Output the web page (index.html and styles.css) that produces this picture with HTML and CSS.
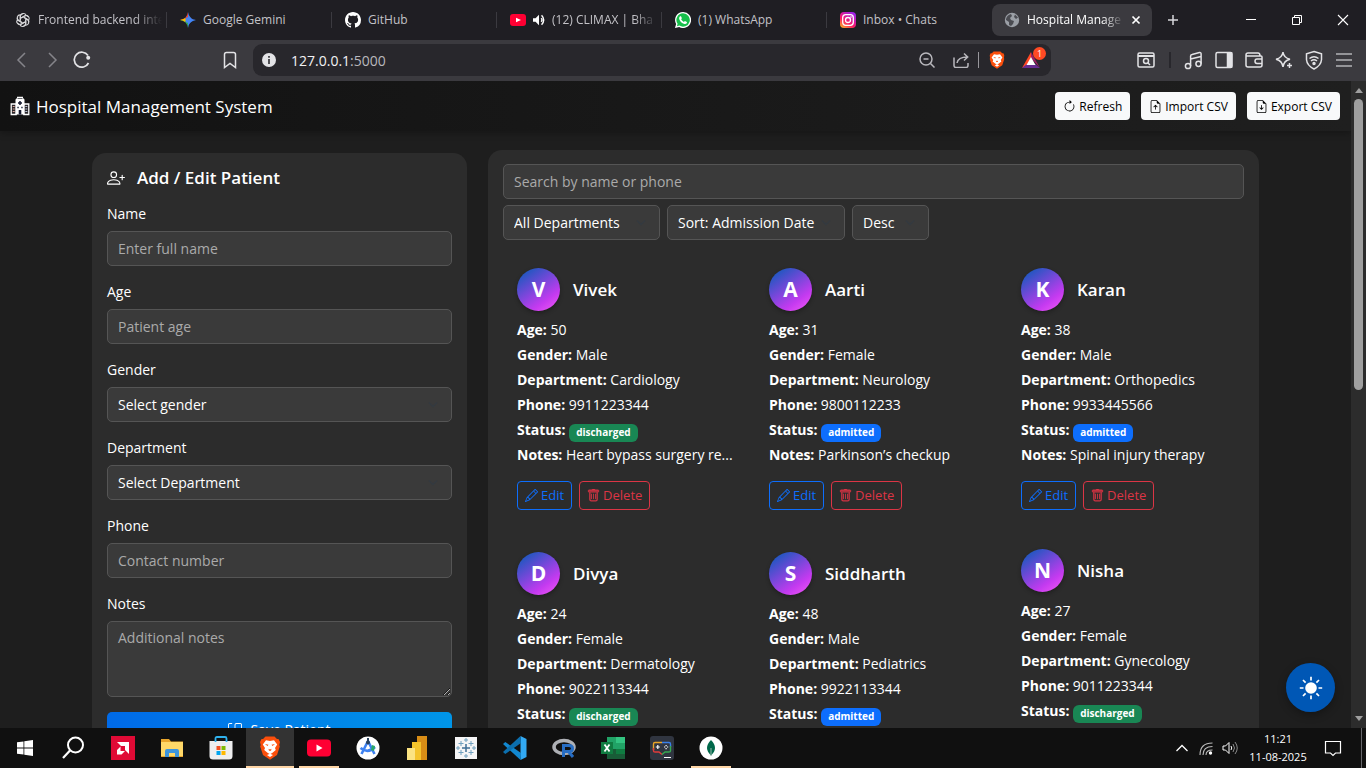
FILE: index.html
```html
<!DOCTYPE html>
<html lang="en">
<head>
<meta charset="utf-8">
<title>Hospital Management System</title>
<link rel="stylesheet" href="styles.css">
</head>
<body>
<svg class="sprite" aria-hidden="true">
  <symbol id="pencil" viewBox="0 0 16 16"><path d="M12.146.146a.5.5 0 0 1 .708 0l3 3a.5.5 0 0 1 0 .708l-10 10a.5.5 0 0 1-.168.11l-5 2a.5.5 0 0 1-.65-.65l2-5a.5.5 0 0 1 .11-.168zM11.207 2.5 13.5 4.793 14.793 3.5 12.5 1.207zm1.586 3L10.5 3.207 4 9.707V10h.5a.5.5 0 0 1 .5.5v.5h.5a.5.5 0 0 1 .5.5v.5h.293zm-9.761 5.175-.106.106-1.528 3.821 3.821-1.528.106-.106A.5.5 0 0 1 5 12.5V12h-.5a.5.5 0 0 1-.5-.5V11h-.5a.5.5 0 0 1-.468-.325"/></symbol>
  <symbol id="trash" viewBox="0 0 16 16"><path d="M5.5 5.500A.5.5 0 0 1 6 6v6a.5.5 0 0 1-1 0V6a.5.5 0 0 1 .5-.5m2.500 0a.5.5 0 0 1 .5.5v6a.5.5 0 0 1-1 0V6a.5.5 0 0 1 .5-.5m3 .5a.5.5 0 0 0-1 0v6a.5.5 0 0 0 1 0z"/><path stroke="currentColor" stroke-width=".5" d="M14.500 3a1 1 0 0 1-1 1H13v9a2 2 0 0 1-2 2H5a2 2 0 0 1-2-2V4h-.5a1 1 0 0 1-1-1V2a1 1 0 0 1 1-1H6a1 1 0 0 1 1-1h2a1 1 0 0 1 1 1h3.500a1 1 0 0 1 1 1zM4.118 4 4 4.059V13a1 1 0 0 0 1 1h6a1 1 0 0 0 1-1V4.059L11.882 4zM2.500 3h11V2h-11z"/></symbol>
  <symbol id="sheet" viewBox="0 0 16 16"><path d="M14 14V4.500L9.500 0H4a2 2 0 0 0-2 2v12a2 2 0 0 0 2 2h8a2 2 0 0 0 2-2M9.500 3A1.500 1.500 0 0 0 11 4.500h2V14a1 1 0 0 1-1 1H4a1 1 0 0 1-1-1V2a1 1 0 0 1 1-1h5.500z"/></symbol>
  <symbol id="petal" viewBox="0 0 16 16"><path d="M5.400 8.500V4.300a3 3 0 0 1 5.700-1.100M5.400 6.200l4-2.300a2.800 2.800 0 0 1 3.600.8" fill="none" stroke="currentColor" stroke-width="1.100"/></symbol>
  <symbol id="lion" viewBox="0 0 20 24"><path d="M5.500.5h9L17 3h1.500L20 6l-.7 3 .5 1.500L17 19l-7 4.700L3 19 .2 10.500.7 9 0 6l1.500-3H3z" fill="#fb4f0c"/><path d="M6 4.200 10 5l4-.8 3.200 4.300L15 12l.8 2-3.300 2.700L10 18.300l-2.500-1.600L4.200 14 5 12 2.800 8.500z" fill="#fff"/><path d="m5 8 3.500.8L7.500 10zM15 8l-3.500.8 1 1.200zM8.500 12.700l1.500.9 1.500-.9-.5 2h-2z" fill="#fb4f0c"/><path d="m7 19 3 2 3-2-3-1.200z" fill="#fff"/></symbol>
</svg>

<header class="tabs">
  <nav class="tab-list" aria-label="Open tabs">
    <a class="tab" href="#"><svg class="i16 pale" viewBox="0 0 16 16"><use href="#petal"/><use href="#petal" transform="rotate(60 8 8)"/><use href="#petal" transform="rotate(120 8 8)"/><use href="#petal" transform="rotate(180 8 8)"/><use href="#petal" transform="rotate(240 8 8)"/><use href="#petal" transform="rotate(300 8 8)"/></svg><span class="tab-name fade">Frontend backend inte</span></a>
    <a class="tab" href="#"><svg class="i16" viewBox="0 0 16 16"><path d="M8 0Q9 7 16 8H8z" fill="#4a80f0"/><path d="M8 0Q7 7 0 8h8z" fill="#e9483c"/><path d="M0 8q7 1 8 8V8z" fill="#32a958"/><path d="M16 8q-7 1-8 8V8z" fill="#3f84f5"/><path d="M0 8q3-.4 4.800-1.700L8 8l-3.200 1.700Q3 8.400 0 8" fill="#fbbc04"/><circle cx="8.500" cy="8" r="3" fill="#4485f4"/></svg><span class="tab-name">Google Gemini</span></a>
    <a class="tab" href="#"><svg class="i16" viewBox="0 0 16 16" fill="#fff"><path d="M8 0C3.580 0 0 3.580 0 8c0 3.540 2.290 6.530 5.470 7.590.4.07.55-.17.55-.38 0-.19-.01-.82-.01-1.490-2.010.37-2.530-.49-2.690-.94-.09-.23-.48-.94-.82-1.130-.28-.15-.68-.52-.01-.53.63-.01 1.080.58 1.230.82.72 1.210 1.870.87 2.330.66.07-.52.28-.87.51-1.070-1.780-.2-3.640-.89-3.640-3.950 0-.87.31-1.590.82-2.150-.08-.2-.36-1.020.08-2.120 0 0 .67-.21 2.200.82.64-.18 1.320-.27 2-.27s1.360.09 2 .27c1.530-1.040 2.200-.82 2.200-.82.44 1.100.16 1.920.08 2.120.51.56.82 1.270.82 2.150 0 3.070-1.870 3.750-3.650 3.950.29.25.54.73.54 1.480 0 1.070-.01 1.930-.01 2.200 0 .21.15.46.55.38A8.010 8.010 0 0 0 16 8c0-4.420-3.580-8-8-8"/></svg><span class="tab-name">GitHub</span></a>
    <a class="tab" href="#"><svg class="i16" viewBox="0 0 16 16"><rect y="2" width="16" height="12" rx="3" fill="#ff0033"/><path d="m6 5.700 5 2.300-5 2.300z" fill="#fff"/></svg><svg class="i12" viewBox="0 0 14 14"><path d="M0 5h3l4-4v12L3 9H0z" fill="#fff"/><path d="M9.500 5q2 2 0 4M10 1.500q5 5.500 0 11" fill="none" stroke="#fff" stroke-width="1.600"/></svg><span class="tab-name fade">(12) CLIMAX | Bha</span></a>
    <a class="tab" href="#"><svg class="i16" viewBox="0 0 16 16"><path d="M8 0a8 8 0 1 1-3.800 15L0 16l1.100-4A8 8 0 0 1 8 0" fill="#fff"/><path d="M8 1.300a6.700 6.700 0 1 1-3.600 12.300l-2.500.6.700-2.400A6.700 6.700 0 0 1 8 1.300" fill="#17bf4b"/><path d="M5 4.300h1l.9 2-.8 1q1 1.800 2.800 2.600l1-1 2 1v1q-.8 1.300-2.500 1Q5.500 11 4.200 7q-.3-1.800.8-2.700" fill="#fff"/></svg><span class="tab-name">(1) WhatsApp</span></a>
    <a class="tab" href="#"><svg class="i16" viewBox="0 0 16 16"><defs><linearGradient id="ig" x1="0" y1="1" x2=".7" y2="0"><stop stop-color="#ffc21e"/><stop offset=".45" stop-color="#fb1867"/><stop offset="1" stop-color="#a021e8"/></linearGradient></defs><rect width="16" height="16" rx="4" fill="url(#ig)"/><g fill="none" stroke="#fff" stroke-width="1.300"><rect x="2.700" y="2.700" width="10.600" height="10.600" rx="3"/><circle cx="8" cy="8" r="2.500"/></g><circle cx="11" cy="5" r=".8" fill="#fff"/></svg><span class="tab-name">Inbox • Chats</span></a>
  </nav>
  <div class="tab tab-current"><svg class="i16" viewBox="0 0 16 16"><circle cx="8" cy="8" r="7.200" fill="#9b9fa6"/><path d="M2 7q1-4 5-5l1 2-2 2 1 2 3 1-1 3-2 2-2-1V10L2 8zM11 2.500l3 3-2 1.500-2-2z" fill="#4b4c52"/></svg><span class="tab-name fade">Hospital Manage</span><button class="tab-close" aria-label="Close tab"><svg viewBox="0 0 10 10" class="i10"><path d="m1.500 1.500 7 7m0-7-7 7" stroke="#fff" stroke-width="1.700"/></svg></button></div>
  <button class="new-tab" aria-label="New tab"><svg class="i12" viewBox="0 0 12 12"><path d="M6 1v10M1 6h10" stroke="#d8d8dc" stroke-width="1.500"/></svg></button>
  <div class="window-controls">
    <button aria-label="Minimize"><svg class="i12" viewBox="0 0 12 12"><path d="M1 5.500h10" stroke="#fff"/></svg></button>
    <button aria-label="Restore"><svg class="i12" viewBox="0 0 12 12"><path d="M1.500 3.500h7v7h-7zM3.500 3V1.500h7v7H9" fill="none" stroke="#fff"/></svg></button>
    <button aria-label="Close"><svg class="i12" viewBox="0 0 12 12"><path d="m1 1 10 10M11 1 1 11" stroke="#fff" stroke-width="1.100"/></svg></button>
  </div>
</header>

<div class="toolbar">
  <div class="nav-buttons">
    <button class="dim" aria-label="Back"><svg class="i18" viewBox="0 0 18 18"><path d="m12 2-7 7 7 7"/></svg></button>
    <button class="dim" aria-label="Forward"><svg class="i18" viewBox="0 0 18 18"><path d="m6 2 7 7-7 7"/></svg></button>
    <button aria-label="Reload"><svg class="i18" viewBox="0 0 18 18"><path d="M15.500 12A7.500 7.500 0 1 1 15 4.500" stroke-width="1.700"/><circle cx="15.200" cy="6.800" r="2" fill="currentColor" stroke="none"/></svg></button>
  </div>
  <button class="bookmark" aria-label="Bookmark"><svg class="i18" viewBox="0 0 18 18"><path d="M3.500 3.500q0-2 2-2h7q2 0 2 2v13L9 12.500l-5.500 4z"/></svg></button>
  <div class="address">
    <svg class="i14" viewBox="0 0 14 14"><circle cx="7" cy="7" r="7" fill="#e3e3e6" stroke="none"/><path d="M7 3v1.700M7 6v5" stroke="#29282d" stroke-width="1.600"/></svg>
    <span class="url">127.0.0.1<span class="port">:5000</span></span>
    <div class="address-tools">
      <button aria-label="Zoom out"><svg class="i16" viewBox="0 0 16 16"><circle cx="7" cy="7" r="6"/><path d="M4.500 7h5M11.500 11.500 15.500 15.500"/></svg></button>
      <button aria-label="Share"><svg class="i16" viewBox="0 0 16 16"><path d="M1 5.500v8q0 2 2 2h10q2 0 2-2V11M4 11q1-6 10.500-6M11 1.500 14.700 5 11 8.500"/></svg></button>
      <span class="divider"></span>
      <button aria-label="Brave Shields"><svg class="i18" viewBox="0 0 20 24"><g class="plain"><use href="#lion"/></g></svg></button>
      <button class="rewards" aria-label="Rewards"><svg class="i18" viewBox="0 0 18 18"><g class="plain"><path d="M9 1 0 17l9-5z" fill="#ff4724"/><path d="M9 1v6l9 10z" fill="#9e1f63"/><path d="M0 17h18l-5-4H5z" fill="#662d91"/><path d="m9 6-4.500 8h9z" fill="#fff"/></g></svg><span class="count">1</span></button>
    </div>
  </div>
  <div class="extensions">
    <button aria-label="Search tabs"><svg class="i20" viewBox="0 0 20 20"><rect x="2" y="3" width="16" height="14" rx="1.500"/><path d="M2 6h16" stroke-width="2"/><circle cx="10" cy="11" r="2.500"/><path d="m12 13 2 2"/></svg></button>
    <span class="divider divider-dark"></span>
    <button aria-label="Playlist"><svg class="i20" viewBox="0 0 20 20"><circle cx="4" cy="16" r="2.600"/><circle cx="14.500" cy="13.800" r="2.600"/><path d="M6.600 16V6q0-1.300 1.500-1.600l7.400-1.800q1.600-.3 1.600 1.200v10M6.600 9l10.500-2.500"/></svg></button>
    <button aria-label="Sidebar"><svg class="i20" viewBox="0 0 20 20"><rect x="2" y="2.500" width="16" height="15" rx="1.500"/><path d="M13.500 3h4v14h-4z" fill="currentColor"/></svg></button>
    <button aria-label="Wallet"><svg class="i20" viewBox="0 0 20 20"><path d="M2 5v10q0 2 2 2h12q2 0 2-2V7q0-1-1-1H3Q2 6 2 5q0-2 2-2h10q2 0 2 3M18 9h-5q-2 0-2 2.200t2 2.200h5"/></svg></button>
    <button aria-label="Leo assistant"><svg class="i20" viewBox="0 0 20 20"><path d="M9 2q.7 6 7 7.200Q9.700 10.500 9 17q-.8-6.500-7-7.800Q8.200 8 9 2M15.500 13v5M13 15.500h5"/></svg></button>
    <button aria-label="VPN"><svg class="i20" viewBox="0 0 20 20"><path d="m10 1.500 7.500 2.300v6Q17 15.500 10 19 3 15.500 2.500 9.800v-6z"/><path d="M5.500 8.500q4.500-3.500 9 0M7 11q3-2.300 6 0"/><circle cx="10" cy="13.500" r="1" fill="currentColor"/></svg></button>
    <button class="dim-light" aria-label="Menu"><svg class="i20" viewBox="0 0 20 20"><path d="M2 4h16M2 10h16M2 16h16"/></svg></button>
  </div>
</div>

<div class="viewport">
  <div class="page">
    <header class="app-bar">
      <h1 class="brand"><svg class="i20" viewBox="0 0 20 20"><path d="M1.200 8h5v10.500h-5zM13.800 8h5v10.500h-5z" fill="#292629" stroke="#fff" stroke-width="1.300"/><path d="M5.500 3.500 7 2V.8h6V2l1.500 1.500v15h-9z" fill="#fff"/><path d="M7.500 2.500h5" stroke="#6b6b70"/><path d="M10 5v4M8 7h4" stroke="#15192e" stroke-width="1.500"/><path d="M7.300 11.500h1.500M11.200 11.500h1.500" stroke="#2b3348" stroke-width="1.700"/><path d="M8.700 18.500V14h2.600v4.500z" fill="#15192e"/><path d="M2.700 10.500h2M2.700 13h2M2.700 15.500h2" stroke="#d9a9a0" stroke-width="1.200"/><path d="M15.300 10.500h2M15.300 13h2M15.300 15.500h2" stroke="#b9c2d8" stroke-width="1.200"/></svg>Hospital Management System</h1>
      <div class="app-actions">
        <button class="light-button"><svg class="i13" viewBox="0 0 16 16"><path fill-rule="evenodd" d="M8 3a5 5 0 1 0 4.546 2.914.5.5 0 0 1 .908-.417A6 6 0 1 1 8 2z"/><path d="M8 4.466V.534a.25.25 0 0 1 .41-.192l2.360 1.966c.12.1.12.284 0 .384L8.410 4.658A.25.25 0 0 1 8 4.466"/></svg>Refresh</button>
        <button class="light-button"><svg class="i13" viewBox="0 0 16 16"><use href="#sheet"/><path d="M8.500 11.500a.5.5 0 0 1-1 0V7.707L6.354 8.854a.5.5 0 1 1-.708-.708l2-2a.5.5 0 0 1 .708 0l2 2a.5.5 0 0 1-.708.708L8.500 7.707z"/></svg>Import CSV</button>
        <button class="light-button"><svg class="i13" viewBox="0 0 16 16"><use href="#sheet"/><path d="M8.500 6.500a.5.5 0 0 0-1 0v3.793L6.354 9.146a.5.5 0 1 0-.708.708l2 2a.5.5 0 0 0 .708 0l2-2a.5.5 0 0 0-.708-.708L8.500 10.293z"/></svg>Export CSV</button>
      </div>
    </header>

    <main class="content">
      <form class="panel patient-form">
        <h2 class="panel-title"><svg class="i18" viewBox="0 0 16 16"><path d="M6 8a3 3 0 1 0 0-6 3 3 0 0 0 0 6m2-3a2 2 0 1 1-4 0 2 2 0 0 1 4 0m4 8c0 1-1 1-1 1H1s-1 0-1-1 1-4 6-4 6 3 6 4m-1-.004c-.001-.246-.154-.986-.832-1.664C9.516 10.680 8.289 10 6 10s-3.516.68-4.168 1.332c-.678.678-.83 1.418-.832 1.664z"/><path d="M13.500 5a.5.5 0 0 1 .5.5V7h1.500a.5.5 0 0 1 0 1H14v1.500a.5.5 0 0 1-1 0V8h-1.500a.5.5 0 0 1 0-1H13V5.500a.5.5 0 0 1 .5-.5"/></svg>Add / Edit Patient</h2>
        <div class="field"><label for="name">Name</label><input class="control" id="name" type="text" placeholder="Enter full name"></div>
        <div class="field"><label for="age">Age</label><input class="control" id="age" type="text" placeholder="Patient age"></div>
        <div class="field"><label for="gender">Gender</label><select class="control" id="gender"><option>Select gender</option></select></div>
        <div class="field"><label for="department">Department</label><select class="control" id="department"><option>Select Department</option></select></div>
        <div class="field"><label for="phone">Phone</label><input class="control" id="phone" type="text" placeholder="Contact number"></div>
        <div class="field"><label for="notes">Notes</label><textarea class="control control-tall" id="notes" placeholder="Additional notes"></textarea></div>
        <button class="save-button" type="button"><svg class="i14" viewBox="0 0 16 16"><path d="M2 1a1 1 0 0 0-1 1v12a1 1 0 0 0 1 1h12a1 1 0 0 0 1-1V2a1 1 0 0 0-1-1H9.500a1 1 0 0 0-1 1v7.293l2.646-2.647a.5.5 0 0 1 .708.708l-3.500 3.500a.5.5 0 0 1-.708 0l-3.500-3.500a.5.5 0 1 1 .708-.708L7.500 9.293V2a2 2 0 0 1 2-2H14a2 2 0 0 1 2 2v12a2 2 0 0 1-2 2H2a2 2 0 0 1-2-2V2a2 2 0 0 1 2-2h2.500a.5.5 0 0 1 0 1z"/></svg>Save Patient</button>
      </form>

      <section class="panel panel-lifted">
        <input class="control" type="search" aria-label="Search patients" placeholder="Search by name or phone">
        <div class="filters">
          <select class="control filter-department" aria-label="Department filter"><option>All Departments</option></select>
          <select class="control filter-sort" aria-label="Sort by"><option>Sort: Admission Date</option></select>
          <select class="control filter-order" aria-label="Sort order"><option>Desc</option></select>
        </div>
        <div class="patients">
          <article class="patient">
            <div class="patient-head"><span class="avatar">V</span><h3>Vivek</h3></div>
            <p><b>Age:</b> 50</p><p><b>Gender:</b> Male</p><p><b>Department:</b> Cardiology</p><p><b>Phone:</b> 9911223344</p><p><b>Status:</b> <span class="badge badge-green">discharged</span></p><p><b>Notes:</b> Heart bypass surgery re...</p>
            <div class="patient-actions"><button class="outline-blue"><svg class="i13"><use href="#pencil"/></svg>Edit</button><button class="outline-red"><svg class="i13"><use href="#trash"/></svg>Delete</button></div>
          </article>
          <article class="patient">
            <div class="patient-head"><span class="avatar">A</span><h3>Aarti</h3></div>
            <p><b>Age:</b> 31</p><p><b>Gender:</b> Female</p><p><b>Department:</b> Neurology</p><p><b>Phone:</b> 9800112233</p><p><b>Status:</b> <span class="badge">admitted</span></p><p><b>Notes:</b> Parkinson’s checkup</p>
            <div class="patient-actions"><button class="outline-blue"><svg class="i13"><use href="#pencil"/></svg>Edit</button><button class="outline-red"><svg class="i13"><use href="#trash"/></svg>Delete</button></div>
          </article>
          <article class="patient">
            <div class="patient-head"><span class="avatar">K</span><h3>Karan</h3></div>
            <p><b>Age:</b> 38</p><p><b>Gender:</b> Male</p><p><b>Department:</b> Orthopedics</p><p><b>Phone:</b> 9933445566</p><p><b>Status:</b> <span class="badge">admitted</span></p><p><b>Notes:</b> Spinal injury therapy</p>
            <div class="patient-actions"><button class="outline-blue"><svg class="i13"><use href="#pencil"/></svg>Edit</button><button class="outline-red"><svg class="i13"><use href="#trash"/></svg>Delete</button></div>
          </article>
          <article class="patient">
            <div class="patient-head"><span class="avatar">D</span><h3>Divya</h3></div>
            <p><b>Age:</b> 24</p><p><b>Gender:</b> Female</p><p><b>Department:</b> Dermatology</p><p><b>Phone:</b> 9022113344</p><p><b>Status:</b> <span class="badge badge-green">discharged</span></p>
          </article>
          <article class="patient">
            <div class="patient-head"><span class="avatar">S</span><h3>Siddharth</h3></div>
            <p><b>Age:</b> 48</p><p><b>Gender:</b> Male</p><p><b>Department:</b> Pediatrics</p><p><b>Phone:</b> 9922113344</p><p><b>Status:</b> <span class="badge">admitted</span></p>
          </article>
          <article class="patient patient-lifted">
            <div class="patient-head"><span class="avatar">N</span><h3>Nisha</h3></div>
            <p><b>Age:</b> 27</p><p><b>Gender:</b> Female</p><p><b>Department:</b> Gynecology</p><p><b>Phone:</b> 9011223344</p><p><b>Status:</b> <span class="badge badge-green">discharged</span></p>
          </article>
        </div>
      </section>
    </main>
    <button class="theme-toggle" aria-label="Toggle theme"><svg class="i24" viewBox="0 0 24 24"><circle cx="12" cy="12" r="5.800" fill="#fff"/><path d="M12 .8v3.700M12 19.500v3.700M.8 12h3.700M19.500 12h3.700M4 4l2.600 2.600M17.400 17.400 20 20M20 4l-2.600 2.600M6.600 17.400 4 20" stroke="#fff" stroke-width="1.700"/></svg></button>
  </div>
  <div class="scrollbar"><span class="arrow-up"></span><span class="thumb"></span><span class="arrow-down"></span></div>
</div>

<footer class="taskbar">
  <button aria-label="Start"><svg class="i16" viewBox="0 0 16 16"><path d="M0 2.300 6.500 1.400v6.200H0zM7.300 1.300 16 0v7.600H7.300zM0 8.400h6.500v6.200L0 13.700zM7.300 8.400H16V16l-8.700-1.300z" fill="#fff"/></svg></button>
  <button aria-label="Search"><svg class="i24" viewBox="0 0 24 24"><circle cx="13.500" cy="9" r="7.500" fill="none" stroke="#fff" stroke-width="2"/><path d="m8 14.500-7 7.500" stroke="#fff" stroke-width="2.200"/></svg></button>
  <button aria-label="AMD Software"><svg class="i24" viewBox="0 0 24 24"><path d="M0 0h24v24H0z" fill="#e00a35"/><path d="M6 6h12v12l-4-4v-4h-4zM9.500 10.500V15H14l-3.500 3.500H6V14z" fill="#fff"/></svg></button>
  <button aria-label="File Explorer"><svg class="i24" viewBox="0 0 24 24"><path d="M1 3h8l2 2.500h12V21H1z" fill="#e9a62c"/><path d="M1 6h22v14H1z" fill="#ffd868"/><path d="M5 21v-6q0-2 2-2h10q2 0 2 2v6h-4v-4H9v4z" fill="#3e95db"/></svg></button>
  <button aria-label="Microsoft Store"><svg class="i24" viewBox="0 0 24 24"><path d="M.5 5h23v15q0 3.500-3.500 3.500H4Q.5 23.500.5 20z" fill="#eeeeef"/><path d="M6.500 6V2.500Q6.500 1 8 1h8q1.500 0 1.500 1.500V6" fill="none" stroke="#2fb2ee" stroke-width="1.800"/><path d="M7.500 10h4v4h-4z" fill="#f25022"/><path d="M12.500 10h4v4h-4z" fill="#7fba00"/><path d="M7.500 15h4v4h-4z" fill="#00a4ef"/><path d="M12.500 15h4v4h-4z" fill="#ffb900"/></svg></button>
  <button class="running focused" aria-label="Brave"><svg class="i24" viewBox="0 0 20 24"><use href="#lion"/></svg></button>
  <button class="running" aria-label="YouTube"><svg class="i24" viewBox="0 0 24 24"><rect y="3.500" width="24" height="17" rx="4" fill="#ff0033"/><path d="m9.500 8.500 6 3.500-6 3.500z" fill="#fff"/></svg></button>
  <button aria-label="Android Studio"><svg class="i24" viewBox="0 0 24 24"><circle cx="12" cy="12" r="11.500" fill="#fff"/><path d="m5.500 18 6-12h1l6 12M4.500 12Q12 18 19 11" fill="none" stroke="#3e82f1" stroke-width="2.600"/><path d="M16 9l3 1-1 5-3-1z" fill="#2ba866"/><circle cx="12" cy="6.500" r="2" fill="#28415d"/><path d="M12 2v3" stroke="#28415d" stroke-width="2"/></svg></button>
  <button aria-label="Power BI"><svg class="i24" viewBox="0 0 24 24"><path d="M12 0h10v24H12z" fill="#d88d16"/><path d="M7 6h9v18H7z" fill="#f4c32b"/><path d="M2 12h8v12H2z" fill="#fbe382"/></svg></button>
  <button aria-label="Tableau"><svg class="i24" viewBox="0 0 24 24"><path d="M1 1h22v22H1z" fill="#f5f5f6"/><path d="M12 8v8M8 12h8" stroke="#3f6f96" stroke-width="1.500"/><path d="M12 2v4M10 4h4M12 18v4M10 20h4M4 10v4M2 12h4M20 10v4M18 12h4M7 5v5M4.500 7.500h5M17 5v5M14.500 7.500h5M7 14v5M4.500 16.500h5M17 14v5M14.500 16.500h5" stroke="#6f9fbe"/></svg></button>
  <button aria-label="Visual Studio Code"><svg class="i24" viewBox="0 0 24 24"><path d="m17.500 0 6 3v18l-6 3z" fill="#32a9f3"/><path d="M17.500 24 0 8l2.300-2L18 17z" fill="#1288d0"/><path d="M17.500 0 0 16l2.300 2L18 7z" fill="#0c6fae"/></svg></button>
  <button aria-label="R"><svg class="i24" viewBox="0 0 24 24"><ellipse cx="12" cy="11" rx="10" ry="6.500" fill="none" stroke="#aeb0b5" stroke-width="3.500"/><path d="M11.500 21V9.500H17q3.500 0 3.500 3t-3.500 3h-4M16.500 15.500l4.500 5.500" fill="none" stroke="#276dc3" stroke-width="3"/></svg></button>
  <button aria-label="Excel"><svg class="i24" viewBox="0 0 24 24"><path d="M6 1h18v22H6z" fill="#185c37"/><path d="M6 1h9v12H6z" fill="#21a366"/><path d="M15 1h9v6h-9z" fill="#33c481"/><path d="M15 7h9v6h-9z" fill="#21a366"/><path d="M15 13h9v5h-9z" fill="#107c41"/><path d="M0 6h12v12H0z" fill="#107c41"/><path d="m3.500 8.500 5 7M8.500 8.500l-5 7" stroke="#fff" stroke-width="1.800"/></svg></button>
  <button aria-label="Game hub"><svg class="i24" viewBox="0 0 24 24"><rect width="24" height="24" rx="3" fill="#303540"/><path d="M12 6.500H5q-1.500 0-1.500 1.500v6" fill="none" stroke="#e9a528" stroke-width="1.400"/><path d="M12 6.500h7q1.500 0 1.500 1.500v3" fill="none" stroke="#3a7fe8" stroke-width="1.400"/><path d="M3.500 12v3q0 1 1.500 1h4l3 2.500" fill="none" stroke="#e23b3b" stroke-width="1.400"/><path d="M20.500 10v5q0 1-1.500 1h-4l-3 2.500" fill="none" stroke="#37a852" stroke-width="1.400"/><path d="M7.800 9v4M5.800 11h4M14 11h1.200M17 11h1.200M16.100 9v1.200M16.100 12v1.200M14 21.500h7" stroke="#fff" stroke-width="1.200"/></svg></button>
  <button class="running" aria-label="MongoDB Compass"><svg class="i24" viewBox="0 0 24 24"><circle cx="12" cy="12" r="11.500" fill="#fff"/><path d="M12 4q8 8 0 15.500Q4 12 12 4" fill="#00684a"/><path d="M12 12v8" stroke="#9ab8ac"/></svg></button>
  <div class="tray">
    <button aria-label="Show hidden icons"><svg class="i14" viewBox="0 0 14 14"><path d="m1.500 10 5.500-5.500L12.500 10" fill="none" stroke="#fff" stroke-width="1.300"/></svg></button>
    <button aria-label="Network"><svg class="i14" viewBox="0 0 14 14"><path d="M1 14Q1 2 13.500 2M4 14q0-8.500 9.500-8.500M7 14q0-5 6.500-5" fill="none" stroke="#bbb" stroke-width="1.100"/><circle cx="11.500" cy="12" r="1.700" fill="#fff"/></svg></button>
    <button aria-label="Volume"><svg class="i16" viewBox="0 0 16 16"><path d="M1 6h2.500L7 2.500v11L3.500 10H1zM9 6q1.500 2 0 4" fill="none" stroke="#fff"/><path d="M11 4q3 4 0 8M13 2q4.500 6 0 12" fill="none" stroke="#8b8b8b"/></svg></button>
    <time class="clock"><span>11:21</span><span>11-08-2025</span></time>
    <button class="notices" aria-label="Notifications"><svg class="i18" viewBox="0 0 18 18"><path d="M1.500 2.500h15V14h-5L9 16.500 6.500 14h-5z" fill="none" stroke="#fff" stroke-width="1.200"/></svg></button>
    <span class="desktop-edge"></span>
  </div>
</footer>
</body>
</html>
```
FILE: styles.css
```css
* { box-sizing: border-box; }

body {
  margin: 0;
  height: 100vh;
  display: flex;
  flex-direction: column;
  overflow: hidden;
  background: #1e1e1e;
  color: #fff;
  font: 14px/21px "Open Sans", "Noto Sans", sans-serif;
}

button, input, select, textarea { font: inherit; color: inherit; }
button { background: none; border: 0; padding: 0; cursor: pointer; }
h1, h2, h3, p { margin: 0; }
svg { display: block; flex: none; }

.sprite { position: absolute; width: 0; height: 0; }
.i10 { width: 10px; height: 10px; }
.i12 { width: 12px; height: 12px; }
.i13 { width: 13px; height: 13px; fill: currentColor; }
.i14 { width: 14px; height: 14px; }
.i16 { width: 16px; height: 16px; }
.i18 { width: 18px; height: 18px; }
.i20 { width: 20px; height: 20px; }
.i24 { width: 24px; height: 24px; }

/* Tab strip */
.tabs {
  flex: none;
  display: flex;
  align-items: center;
  height: 40px;
  padding-left: 2px;
  background: #1f1e23;
  font-size: 12px;
  line-height: 16px;
}
.tab-list { display: flex; }
.tab {
  display: flex;
  align-items: center;
  gap: 7px;
  width: 165px;
  height: 16px;
  padding: 0 4px 0 13px;
  border-right: 1px solid #3b3a40;
  color: #c3c2c7;
  text-decoration: none;
}
.tab:last-child { border-color: transparent; }
.tab-name { flex: 1; min-width: 0; overflow: hidden; white-space: nowrap; }
.fade { mask-image: linear-gradient(to right, #000 78%, transparent); }
.pale { color: #d6d6d8; }
.tab-current {
  width: 160px;
  height: 32px;
  padding: 0 11px 0 12px;
  border: 0;
  border-radius: 8px;
  background: #3b3a3f;
  color: #fff;
}
.new-tab { margin-left: 15px; }
.window-controls { display: flex; margin-left: auto; }
.window-controls button { display: grid; place-items: center; width: 46px; height: 40px; }

/* Toolbar */
.toolbar {
  flex: none;
  display: flex;
  align-items: center;
  height: 41px;
  padding: 0 12px 1px 13px;
  background: #3b3a3f;
}
.toolbar svg { fill: none; stroke: currentColor; stroke-width: 1.5; }
.toolbar .plain { stroke: none; }
.toolbar button { color: #e3e3e6; }
.toolbar .dim { color: #85848a; }
.nav-buttons { display: flex; gap: 12px; }
.toolbar .bookmark { margin: 0 14px 0 130px; }
.address {
  flex: 1;
  display: flex;
  align-items: center;
  height: 32px;
  padding: 0 11px 0 9px;
  border-radius: 9px;
  background: #28272c;
}
.url { margin-left: 15px; color: #f2f2f4; }
.port { color: #b9b8bd; }
.address-tools { display: flex; align-items: center; gap: 9px; margin-left: auto; }
.toolbar .address-tools button { color: #b9b8bd; }
.address-tools button:first-child { margin-right: 9px; }
.divider { width: 1px; height: 16px; background: #98979c; }
.rewards { position: relative; margin-left: 7px; }
.toolbar .count {
  position: absolute;
  top: -4px;
  right: -6px;
  width: 13px;
  height: 13px;
  border-radius: 50%;
  background: #ff4a24;
  color: #fff;
  font-size: 9px;
  line-height: 13px;
}
.extensions { display: flex; align-items: center; gap: 10px; margin-left: 85px; }
.divider-dark { width: 2px; background: #28272c; margin: 0 3px; }
.toolbar .dim-light { color: #b3b2b7; }

/* Page viewport */
.viewport { flex: 1; min-height: 0; display: flex; }
.page { position: relative; flex: 1; min-width: 0; overflow: hidden; }
.app-bar {
  display: flex;
  align-items: center;
  justify-content: space-between;
  height: 50px;
  padding: 0 11px 0 10px;
  background: linear-gradient(90deg, #121212, #1f1f1f);
  box-shadow: 0 2px 7px rgba(0, 0, 0, 0.3);
}
.brand { display: flex; align-items: center; gap: 6px; font-size: 17px; font-weight: 400; }
.app-actions { display: flex; gap: 11px; }
.light-button {
  display: flex;
  align-items: center;
  gap: 3px;
  height: 28px;
  padding: 0 8px;
  border-radius: 4px;
  background: #f8f9fa;
  color: #000;
  font-size: 12px;
}

.content {
  display: grid;
  grid-template-columns: 375fr 771fr;
  gap: 21px;
  max-width: 1167px;
  margin: 0 auto;
  padding-top: 22px;
}
.panel {
  min-width: 0;
  padding: 14px 15px;
  border-radius: 14px;
  background: #2c2c2c;
}
.panel-lifted { margin-top: -3px; }
.panel-title {
  display: flex;
  align-items: center;
  gap: 12px;
  margin-bottom: 14px;
  font-size: 17px;
  line-height: 22px;
  font-weight: 600;
}
.panel-title svg { fill: currentColor; }
.field { display: flex; flex-direction: column; gap: 7px; margin-bottom: 15px; }
.control {
  display: block;
  width: 100%;
  height: 35px;
  padding: 0 10px;
  border: 1px solid #555;
  border-radius: 5px;
  outline: 0;
  background: #3a3a3a;
  appearance: none;
}
select.control {
  background: #3a3a3a url("data:image/svg+xml,%3Csvg xmlns='http://www.w3.org/2000/svg' viewBox='0 0 16 16'%3E%3Cpath d='m2 5 6 6 6-6' fill='none' stroke='%23343a40' stroke-width='2'/%3E%3C/svg%3E") no-repeat right 11px center / 14px 11px;
}
.control::placeholder { color: #aaa; opacity: 1; }
.control-tall { height: 76px; padding: 5px 10px; resize: vertical; }
.save-button {
  display: flex;
  align-items: center;
  justify-content: center;
  gap: 8px;
  width: 100%;
  height: 35px;
  border-radius: 5px;
  background: linear-gradient(90deg, #006ae8, #0095e8);
}
.save-button svg { fill: currentColor; }

.filters { display: flex; gap: 7px; margin-top: 6px; }
.filter-department { width: 157px; }
.filter-sort { width: 178px; }
.filter-order { width: 77px; }

.patients {
  display: grid;
  grid-template-columns: repeat(3, minmax(0, 1fr));
  gap: 14px 15px;
  margin-top: 14px;
}
.patient { padding: 14px; }
.patient-lifted { margin-top: -3px; }
.patient-head { display: flex; align-items: center; gap: 13px; margin-bottom: 8px; }
.patient h3 { font-size: 17px; font-weight: 600; }
.patient p { height: 21px; margin-bottom: 4px; white-space: nowrap; }
.avatar {
  display: grid;
  place-items: center;
  width: 43px;
  height: 43px;
  border-radius: 50%;
  background: linear-gradient(145deg, #1f57c0 12%, #c43af0 72%, #f65bf5);
  box-shadow: 0 2px 4px rgba(0, 0, 0, 0.3);
  font-size: 21px;
  font-weight: 700;
}
.badge {
  display: inline-block;
  height: 18px;
  padding: 0 7px;
  border-radius: 6px;
  background: #0d6efd;
  font-size: 10px;
  line-height: 17px;
  font-weight: 700;
  vertical-align: -1px;
}
.badge-green { background: #198754; }
.patient-actions { display: flex; gap: 7px; margin-top: 16px; }
.patient-actions button {
  display: flex;
  align-items: center;
  gap: 3px;
  height: 29px;
  padding: 0 7px;
  border: 1px solid;
  border-radius: 4px;
  font-size: 13px;
}
.patient-actions .outline-blue { color: #0d6efd; }
.patient-actions .outline-red { color: #dc3545; }

.theme-toggle {
  position: absolute;
  right: 16px;
  bottom: 16px;
  display: grid;
  place-items: center;
  width: 49px;
  height: 49px;
  border-radius: 50%;
  background: #0057b5;
  box-shadow: 0 3px 8px rgba(0, 0, 0, 0.3);
}

.scrollbar {
  flex: none;
  display: flex;
  flex-direction: column;
  align-items: center;
  width: 15px;
  padding: 7px 0;
  background: #2c2c2c;
}
.arrow-up { border: 4px solid transparent; border-top: 0; border-bottom: 5px solid #9f9f9f; }
.thumb { width: 9px; height: 46%; margin-top: 6px; border-radius: 5px; background: #9f9f9f; }
.arrow-down { margin-top: auto; border: 4px solid transparent; border-bottom: 0; border-top: 5px solid #9f9f9f; }

/* Taskbar */
.taskbar { flex: none; display: flex; gap: 1px; height: 40px; padding-left: 1px; background: #101010; }
.taskbar button { display: grid; place-items: center; width: 48px; height: 40px; }
.taskbar .focused { background: #333; }
.taskbar .running {
  background-image: linear-gradient(#ffd6a6, #ffd6a6);
  background-repeat: no-repeat;
  background-position: bottom;
  background-size: 40px 2px;
}
.taskbar .focused { background-size: 48px 2px; }
.tray { display: flex; align-items: center; margin-left: auto; }
.taskbar .tray button { width: 24px; }
.clock {
  display: flex;
  flex-direction: column;
  align-items: center;
  width: 72px;
  font-size: 11px;
  line-height: 18px;
}
.taskbar .tray .notices { width: 38px; }
.desktop-edge { width: 5px; height: 40px; border-left: 1px solid #66666a; margin-left: 9px; }
```
